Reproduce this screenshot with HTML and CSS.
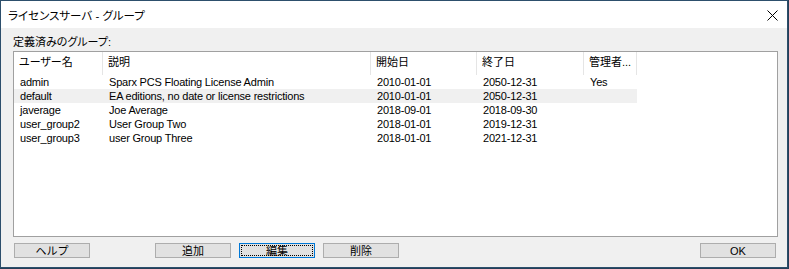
FILE: index.html
```html
<!DOCTYPE html>
<html lang="ja">
<head>
  <meta charset="UTF-8">
  <meta name="viewport" content="width=device-width, initial-scale=1.0">
  <title>ライセンスサーバ - グループ</title>
  <link rel="stylesheet" href="styles.css">
</head>
<body>

<div class="window">
  <div class="titlebar">
    <span class="title">ライセンスサーバ - グループ</span>
    <svg class="close" width="11" height="11" viewBox="0 0 11 11">
      <path d="M0.5 0.5 L10.5 10.5 M10.5 0.5 L0.5 10.5" stroke="#000" stroke-width="1"/>
    </svg>
  </div>

  <div class="content">
    <div class="label">定義済みのグループ:</div>

    <div class="listbox">
      <div class="row header">
        <div class="cell">ユーザー名</div>
        <div class="cell">説明</div>
        <div class="cell">開始日</div>
        <div class="cell">終了日</div>
        <div class="cell">管理者...</div>
      </div>
      <div class="row">
        <div class="cell">admin</div>
        <div class="cell">Sparx PCS Floating License Admin</div>
        <div class="cell">2010-01-01</div>
        <div class="cell">2050-12-31</div>
        <div class="cell">Yes</div>
      </div>
      <div class="row hover">
        <div class="cell">default</div>
        <div class="cell">EA editions, no date or license restrictions</div>
        <div class="cell">2010-01-01</div>
        <div class="cell">2050-12-31</div>
        <div class="cell"></div>
      </div>
      <div class="row">
        <div class="cell">javerage</div>
        <div class="cell">Joe Average</div>
        <div class="cell">2018-09-01</div>
        <div class="cell">2018-09-30</div>
        <div class="cell"></div>
      </div>
      <div class="row">
        <div class="cell">user_group2</div>
        <div class="cell">User Group Two</div>
        <div class="cell">2018-01-01</div>
        <div class="cell">2019-12-31</div>
        <div class="cell"></div>
      </div>
      <div class="row">
        <div class="cell">user_group3</div>
        <div class="cell">user Group Three</div>
        <div class="cell">2018-01-01</div>
        <div class="cell">2021-12-31</div>
        <div class="cell"></div>
      </div>
    </div>

    <div class="buttons">
      <button>ヘルプ</button>
      <button class="add">追加</button>
      <button class="focused"><span>編集</span></button>
      <button>削除</button>
      <button class="ok">OK</button>
    </div>
  </div>
</div>

</body>
</html>
```

FILE: styles.css
```css
body {
  margin: 0;
  background: #243f57;
  font-family: 'Liberation Sans', 'Noto Sans CJK JP', sans-serif;
  font-size: 11px;
  font-feature-settings: "palt";
  color: #000;
}

.window {
  width: 788px;
  height: 268px;
  box-sizing: border-box;
  border: 1px solid #2d4f6c;
  background: #f0f0f0;
  display: flex;
  flex-direction: column;
}

.titlebar {
  height: 27px;
  background: #fff;
  display: flex;
  align-items: center;
  padding: 0 8px 0 7px;
}

.title {
  flex: 1;
  font-size: 11.5px;
}

.close {
  margin-right: 1px;
  margin-top: 1px;
}

.content {
  flex: 1;
  display: flex;
  flex-direction: column;
  padding: 8px 9px 0 12px;
}

.label {
  height: 15px;
  line-height: 12px;
}

.listbox {
  height: 186px;
  box-sizing: border-box;
  border: 1px solid #a0a0a0;
  background: #fff;
}

.row {
  display: grid;
  grid-template-columns: 89px 268px 106px 107px 53px;
  width: max-content;
  height: 14px;
  line-height: 14px;
  letter-spacing: -0.2px;
}

.row .cell {
  padding-left: 6px;
  white-space: nowrap;
  overflow: hidden;
}

.row.header {
  height: 23px;
  line-height: 21px;
  letter-spacing: 0;
}

.header .cell {
  border-right: 1px solid #e5e5e5;
  padding-left: 5px;
}

.hover {
  background: #f0f0f0;
}

.buttons {
  display: flex;
  gap: 8px;
  padding: 6px 2px 0 1px;
}

button {
  width: 76px;
  height: 15px;
  padding: 0;
  border: 1px solid #adadad;
  background: #e1e1e1;
  font-family: inherit;
  font-size: 11px;
  line-height: 12px;
  color: #000;
}

.add {
  margin-left: 57px;
}

.focused {
  border-color: #0078d7;
  padding: 1px;
}

.focused span {
  display: block;
  height: 100%;
  box-sizing: border-box;
  border: 1px dotted #000;
  line-height: 10px;
}

.ok {
  margin-left: auto;
}
```
